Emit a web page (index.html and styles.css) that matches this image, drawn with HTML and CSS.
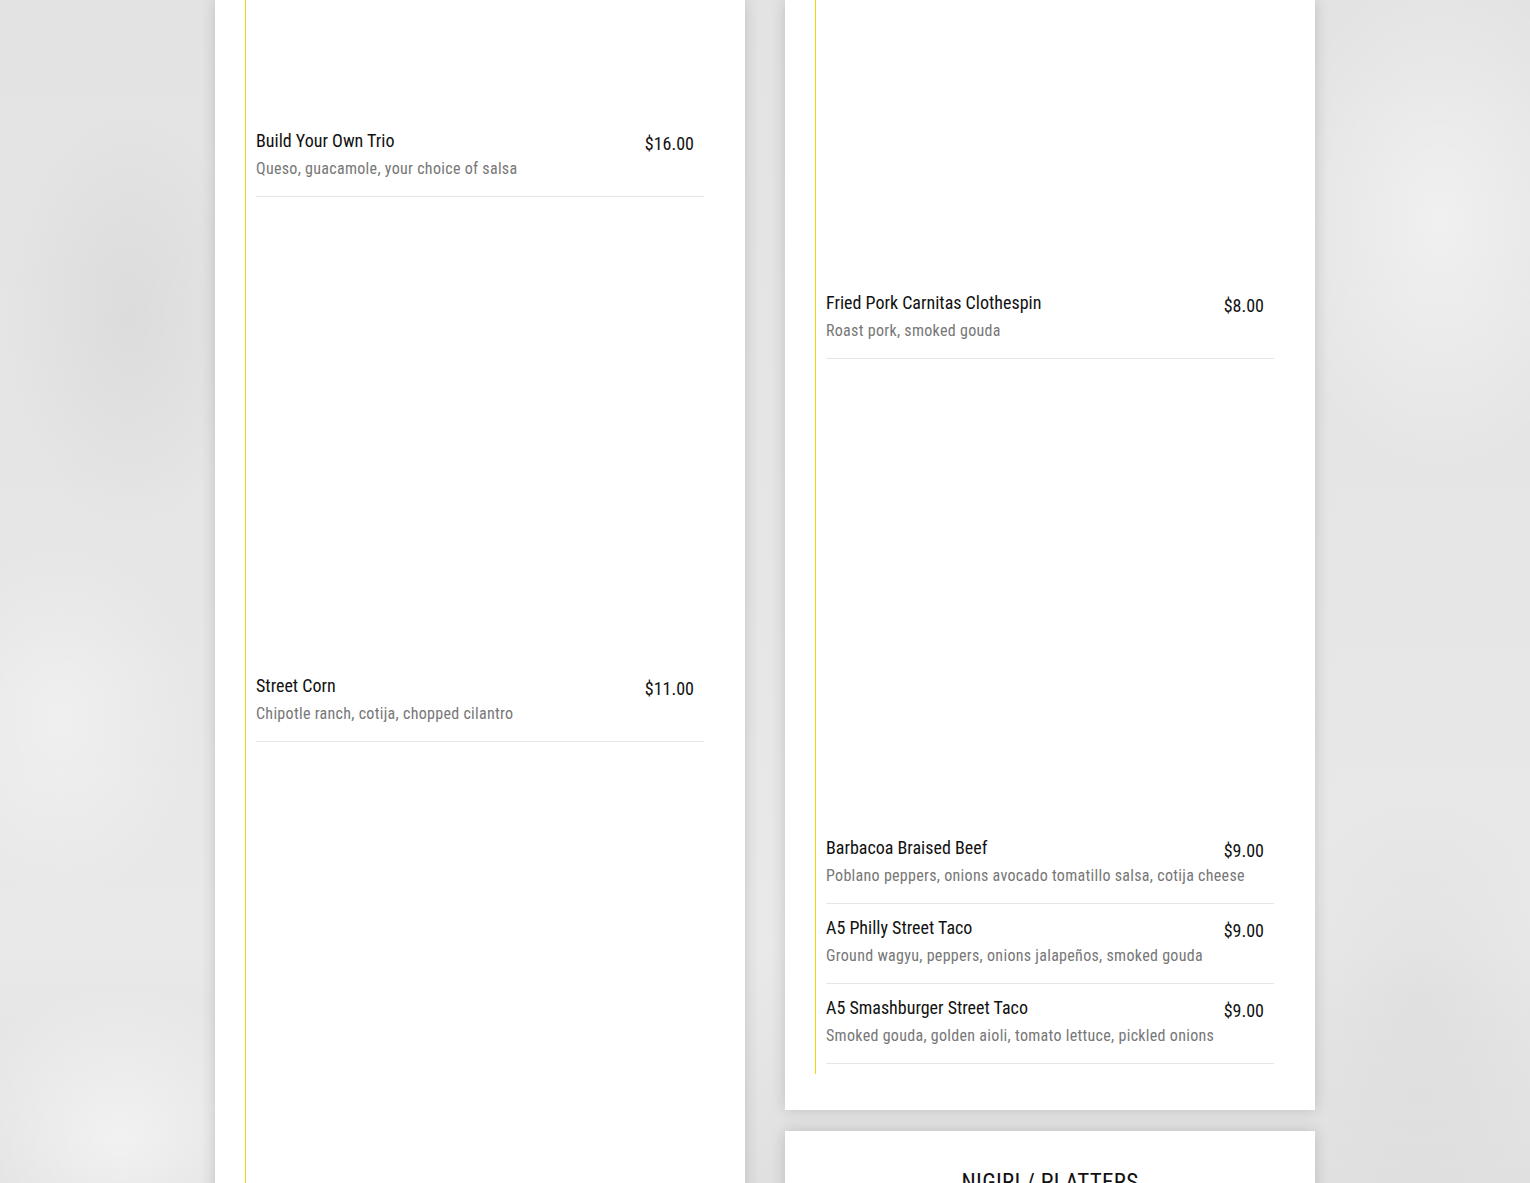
FILE: index.html
```html
<!DOCTYPE html>
<html lang="en">
<head>
<meta charset="utf-8">
<title>Menu</title>
<link rel="stylesheet" href="styles.css">
</head>
<body>
<main class="menu">
  <div class="column">
    <section class="card card-first">
      <div class="list">
        <article class="item">
          <div class="photo photo-top-left"></div>
          <div class="row">
            <h3 class="name">Build Your Own Trio</h3>
            <span class="price">$16.00</span>
          </div>
          <p class="desc">Queso, guacamole, your choice of salsa</p>
        </article>
        <article class="item">
          <div class="photo"></div>
          <div class="row">
            <h3 class="name">Street Corn</h3>
            <span class="price">$11.00</span>
          </div>
          <p class="desc">Chipotle ranch, cotija, chopped cilantro</p>
        </article>
        <article class="item item-open">
          <div class="photo"></div>
        </article>
      </div>
    </section>
  </div>
  <div class="column">
    <section class="card card-first">
      <div class="list">
        <article class="item">
          <div class="photo photo-top-right"></div>
          <div class="row">
            <h3 class="name">Fried Pork Carnitas Clothespin</h3>
            <span class="price">$8.00</span>
          </div>
          <p class="desc">Roast pork, smoked gouda</p>
        </article>
        <article class="item">
          <div class="photo"></div>
          <div class="row">
            <h3 class="name">Barbacoa Braised Beef</h3>
            <span class="price">$9.00</span>
          </div>
          <p class="desc">Poblano peppers, onions avocado tomatillo salsa, cotija cheese</p>
        </article>
        <article class="item">
          <div class="row">
            <h3 class="name">A5 Philly Street Taco</h3>
            <span class="price">$9.00</span>
          </div>
          <p class="desc">Ground wagyu, peppers, onions jalapeños, smoked gouda</p>
        </article>
        <article class="item">
          <div class="row">
            <h3 class="name">A5 Smashburger Street Taco</h3>
            <span class="price">$9.00</span>
          </div>
          <p class="desc">Smoked gouda, golden aioli, tomato lettuce, pickled onions</p>
        </article>
      </div>
    </section>
    <section class="card">
      <h2 class="card-title">NIGIRI / PLATTERS</h2>
    </section>
  </div>
</main>
</body>
</html>
```
FILE: styles.css
```css
html, body {
  margin: 0;
  padding: 0;
  height: 100%;
  overflow: hidden;
}

body {
  font-family: "Roboto Condensed", "Roboto", "Liberation Sans", sans-serif;
  font-stretch: 75%;
  background-color: #e2e2e2;
  background-image:
    radial-gradient(ellipse 260px 220px at 120px 1140px, rgba(255,255,255,0.55), rgba(255,255,255,0) 70%),
    radial-gradient(ellipse 200px 260px at 60px 720px, rgba(255,255,255,0.35), rgba(255,255,255,0) 70%),
    radial-gradient(ellipse 240px 360px at 1440px 220px, rgba(255,255,255,0.45), rgba(255,255,255,0) 70%),
    radial-gradient(ellipse 180px 300px at 130px 320px, rgba(0,0,0,0.04), rgba(0,0,0,0) 70%),
    radial-gradient(ellipse 220px 300px at 1420px 1000px, rgba(0,0,0,0.03), rgba(0,0,0,0) 70%),
    linear-gradient(180deg, #e3e3e3 0%, #e6e6e6 50%, #e9e9e9 80%, #e0e0e0 100%);
}

.menu {
  display: flex;
  justify-content: center;
  align-items: flex-start;
  gap: 40px;
}

.column {
  width: 530px;
  display: flex;
  flex-direction: column;
  gap: 21px;
}

.card {
  background: #fff;
  box-shadow: 0 0 14px rgba(0, 0, 0, 0.16);
  padding: 36px 30px 36px;
}

.card-first {
  padding-top: 0;
}

.list {
  border-left: 1px solid #f0d610;
  padding: 0 11px 10px 10px;
}

.item {
  border-bottom: 1px solid #e6e6e6;
  padding: 12px 0 16px;
}

.item-open {
  border-bottom: 0;
  padding-bottom: 0;
}

.photo {
  height: 450px;
  margin-bottom: 15px;
}

.photo-top-left {
  height: 114px;
  margin-top: -12px;
}

.photo-top-right {
  height: 276px;
  margin-top: -12px;
}

.row {
  display: flex;
  justify-content: space-between;
  align-items: flex-start;
  gap: 16px;
}

.name {
  margin: 0;
  font-size: 18px;
  font-weight: 400;
  line-height: 24px;
  color: #111;
}

.price {
  flex: none;
  margin: 3px 10px 0 0;
  font-size: 18px;
  line-height: 24px;
  color: #111;
}

.desc {
  margin: 2px 0 0;
  font-size: 16px;
  line-height: 22px;
  letter-spacing: 0.3px;
  color: #777;
}

.card-title {
  margin: 1px 0 0;
  text-align: center;
  font-size: 23px;
  font-weight: 400;
  line-height: 30px;
  color: #111;
  letter-spacing: 0.3px;
}
```
